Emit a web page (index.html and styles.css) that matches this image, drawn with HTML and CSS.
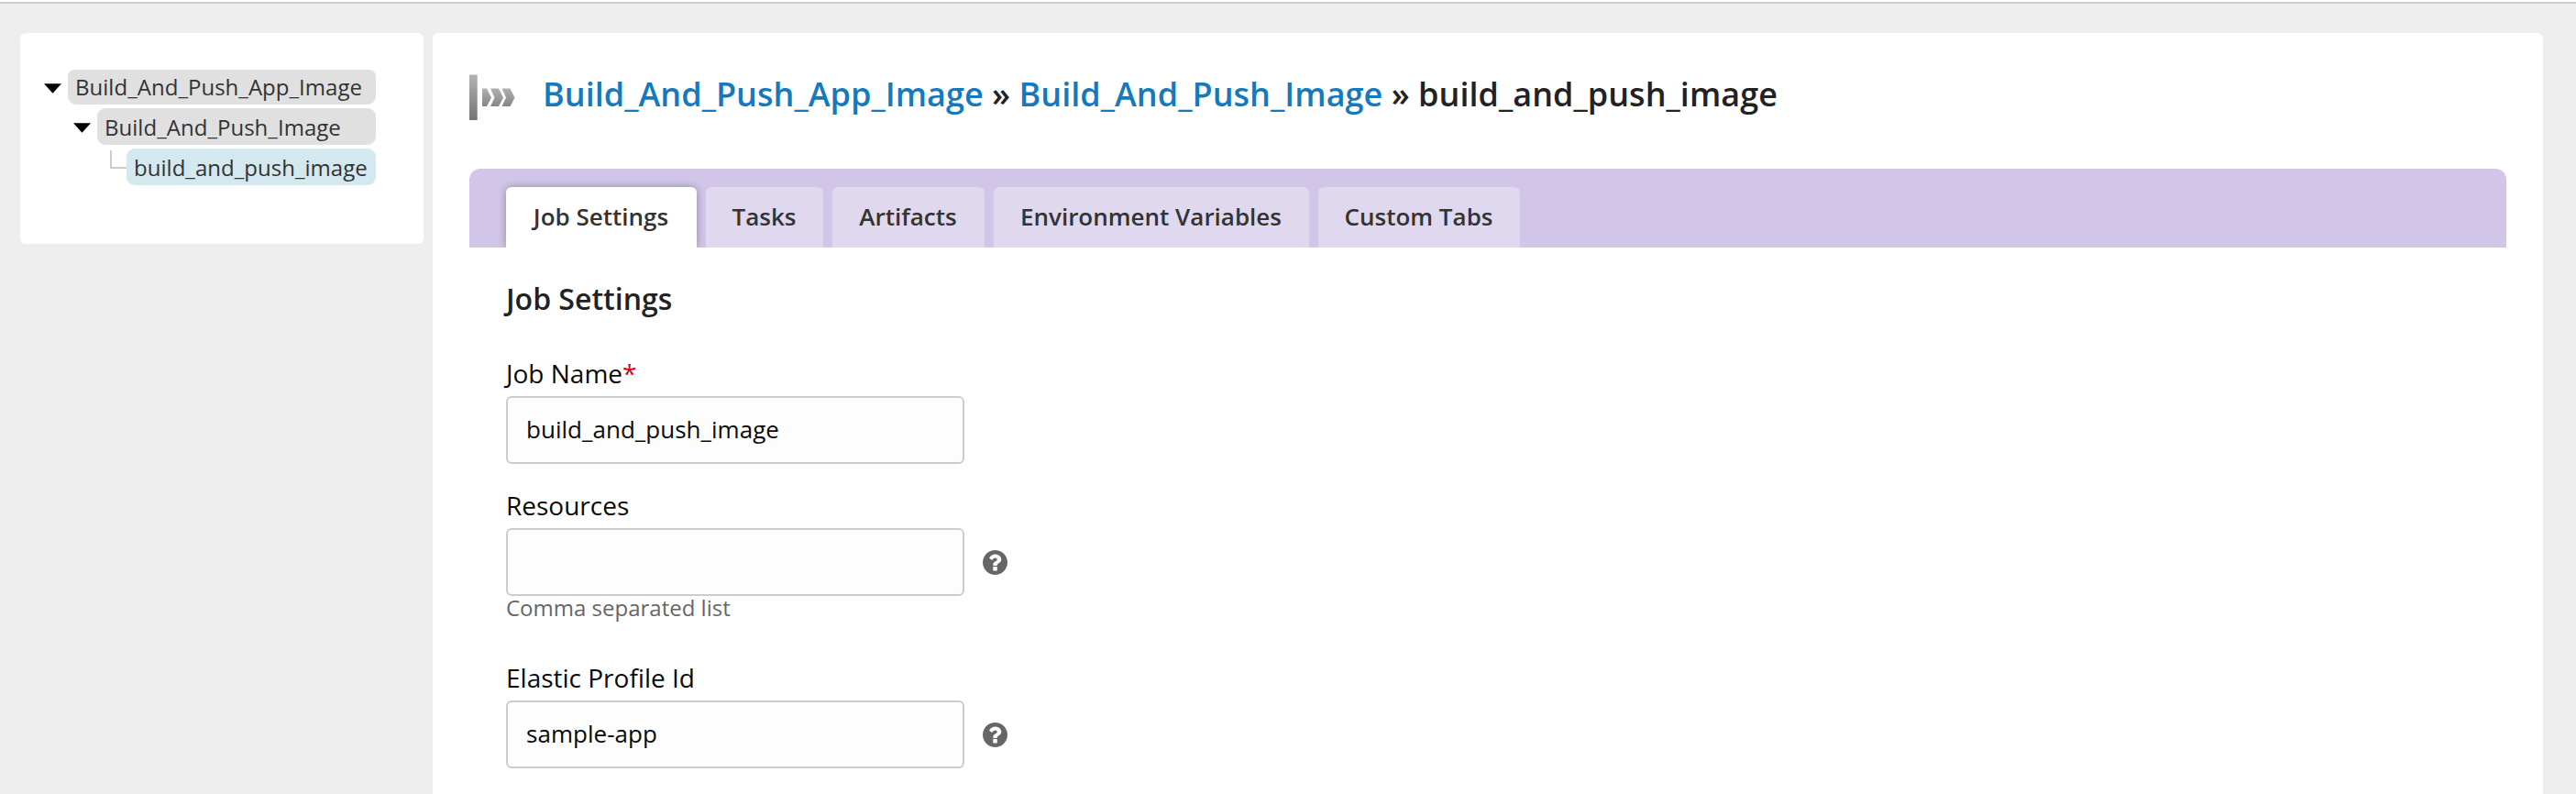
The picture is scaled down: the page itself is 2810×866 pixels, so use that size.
FILE: index.html
```html
<!DOCTYPE html>
<html lang="en">
<head>
<meta charset="utf-8">
<title>build_and_push_image</title>
<link rel="stylesheet" href="styles.css">
</head>
<body>
<svg width="0" height="0" class="symbols">
  <symbol id="question" viewBox="128 128 1536 1536"><path d="M1024 1376v-192q0-14-9-23t-23-9h-192q-14 0-23 9t-9 23v192q0 14 9 23t23 9h192q14 0 23-9t9-23zm256-672q0-88-55.500-163t-138.500-116-170-41q-243 0-371 213-15 24 8 42l132 100q7 6 19 6 16 0 25-12 53-68 86-92 34-24 86-24 48 0 85.500 26t37.500 59q0 38-20 61t-68 45q-63 28-115.500 86.500t-52.500 125.500v36q0 14 9 23t23 9h192q14 0 23-9t9-23q0-19 21.500-49.500t54.500-49.500q32-18 49-28.500t46-35 44.500-48 28-60.500 12.500-81zm384 192q0 209-103 385.500t-279.500 279.500-385.500 103-385.500-103-279.500-279.500-103-385.500 103-385.500 279.500-279.500 385.500-103 385.500 103 279.500 279.500 103 385.500z"/></symbol>
</svg>
<div class="page">
  <aside class="sidebar">
    <div class="node node-root"><svg class="caret" viewBox="0 0 20 11"><path d="M0 0h20L10 11z"/></svg><a class="node-label first">Build_And_Push_App_Image</a></div>
    <div class="node node-stage"><svg class="caret" viewBox="0 0 20 11"><path d="M0 0h20L10 11z"/></svg><a class="node-label">Build_And_Push_Image</a></div>
    <div class="node node-job"><span class="branch"></span><a class="node-label selected">build_and_push_image</a></div>
  </aside>
  <main class="content">
    <header class="title-bar">
      <svg class="job-icon" viewBox="0 0 50 52">
        <defs>
          <linearGradient id="bar" x1="0" y1="0" x2="0" y2="1"><stop offset="0" stop-color="#b3b3b3"/><stop offset="1" stop-color="#737373"/></linearGradient>
          <linearGradient id="arrow" x1="0" y1="0" x2="0" y2="1"><stop offset="0" stop-color="#b0b0b0"/><stop offset="1" stop-color="#858585"/></linearGradient>
        </defs>
        <path fill="url(#bar)" d="M0 1.500h8.700v49.500H0z"/>
        <path fill="url(#arrow)" d="M14 16.500h5l5 10-5 9.500h-5zM23 16.500h9l5 10-5 9.500h-9l4.500-9.500zM35.500 16.500h9l5 10-5 9.500h-9l4.500-9.500z"/>
      </svg>
      <h1 class="title"><a>Build_And_Push_App_Image</a> » <a>Build_And_Push_Image</a> » build_and_push_image</h1>
    </header>
    <nav class="tabs">
      <a class="tab active">Job Settings</a>
      <a class="tab tab-tasks">Tasks</a>
      <a class="tab tab-artifacts">Artifacts</a>
      <a class="tab tab-env">Environment Variables</a>
      <a class="tab tab-custom">Custom Tabs</a>
    </nav>
    <form class="form">
      <h2 class="section-title">Job Settings</h2>
      <label class="label">Job Name<span class="required">*</span></label>
      <div class="row"><input class="input" type="text" value="build_and_push_image"></div>
      <label class="label spaced">Resources</label>
      <div class="row"><input class="input" type="text"><svg class="help"><use href="#question"/></svg></div>
      <div class="hint">Comma separated list</div>
      <label class="label after-hint">Elastic Profile Id</label>
      <div class="row"><input class="input" type="text" value="sample-app"><svg class="help"><use href="#question"/></svg></div>
    </form>
  </main>
</div>
</body>
</html>
```
FILE: styles.css
```css
* { box-sizing: border-box; }

body {
  margin: 0;
  padding-top: 2px;
  height: 866px;
  overflow: hidden;
  background: #fff;
  font-family: "Open Sans", "Noto Sans", sans-serif;
}

.symbols { display: none; }

.page {
  display: flex;
  align-items: flex-start;
  gap: 10px;
  height: 864px;
  padding: 32px 36px 0 22px;
  border-top: 2px solid #ccc;
  background: #eee;
}

.sidebar {
  display: flex;
  flex-direction: column;
  gap: 4px;
  width: 440px;
  height: 230px;
  padding: 40px 52px 0 26px;
  border-radius: 6px;
  background: #fff;
}

.node { display: flex; align-items: center; }
.node-stage { padding-left: 32px; }
.node-job { padding-left: 72px; align-items: flex-start; }

.caret { width: 19px; height: 11px; margin-right: 7px; margin-top: 3px; }

.node-label {
  flex: 1;
  height: 40px;
  padding: 1px 8px 0;
  border-radius: 9px;
  background: #e0e0e0;
  color: #333;
  font-size: 24px;
  line-height: 40px;
  letter-spacing: .03px;
  white-space: nowrap;
}

.node-label.first { height: 38px; padding-top: 0; line-height: 38px; border-radius: 7px 7px 9px 9px; }
.node-label.selected { background: #d3e9ef; }

.branch {
  width: 18px;
  height: 20px;
  margin-top: 2px;
  border: solid #ccc;
  border-width: 0 0 2px 2px;
}

.content {
  flex: 1;
  height: 830px;
  padding: 41px 40px 0;
  border-radius: 6px 6px 0 0;
  background: #fff;
}

.title-bar { display: flex; gap: 30px; height: 107px; }
.job-icon { width: 50px; height: 52px; margin-top: 3px; }

.title {
  margin: 0;
  color: #222;
  font-size: 36px;
  font-weight: 600;
  line-height: 52px;
  letter-spacing: .02px;
  white-space: nowrap;
}

.title a { color: #147abd; }

.tabs {
  display: flex;
  gap: 10px;
  height: 86px;
  padding: 20px 40px 0;
  border-radius: 12px 12px 0 0;
  background: #d1c6e8;
  overflow: hidden;
}

.tab {
  width: 208px;
  padding-right: 1px;
  border-radius: 6px 6px 0 0;
  background: #e0d8ef;
  color: #333;
  font-size: 26px;
  font-weight: 600;
  line-height: 64px;
  text-align: center;
  white-space: nowrap;
}

.tab.active { background: #fff; box-shadow: 0 0 10px rgba(0, 0, 0, .3); }
.tab-tasks { width: 128px; }
.tab-artifacts { width: 166px; }
.tab-env { width: 344px; }
.tab-custom { width: 220px; }

.form { padding: 34px 40px 0; }

.section-title {
  margin: 0 0 42px;
  color: #222;
  font-size: 32px;
  font-weight: 600;
  line-height: 44px;
}

.label {
  display: block;
  height: 42px;
  color: #0a0a0a;
  font-size: 28px;
  line-height: 34px;
}

.label.spaced { margin-top: 28px; }
.label.after-hint { margin-top: 36px; }
.required { color: #d0021b; }

.row { display: flex; align-items: center; gap: 20px; }

.input {
  width: 500px;
  height: 74px;
  padding: 0 20px 2px;
  border: 2px solid #ccc;
  border-radius: 6px;
  background: #fdfdfd;
  color: #0a0a0a;
  font: 26px "Open Sans", "Noto Sans", sans-serif;
  letter-spacing: .03px;
}

.help { width: 27px; height: 27px; fill: #666; }

.hint { height: 36px; color: #666; font-size: 24px; line-height: 26px; }
```
